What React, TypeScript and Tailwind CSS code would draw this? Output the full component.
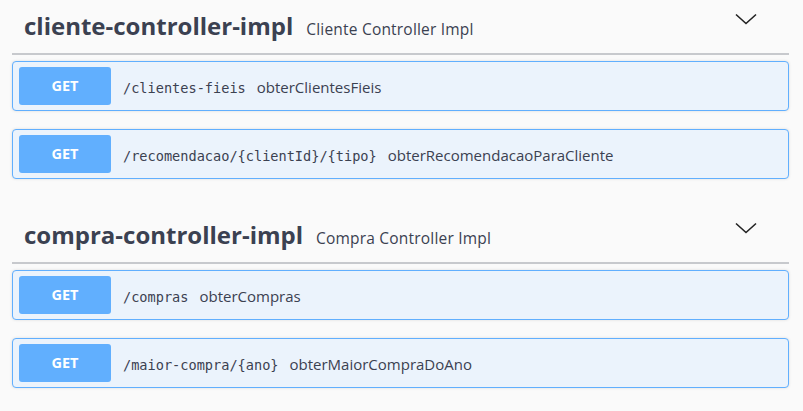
import React from 'react';

type Op = { path: string; summary: string };

const sections: { name: string; desc: string; ops: Op[] }[] = [
  {
    name: 'cliente-controller-impl',
    desc: 'Cliente Controller Impl',
    ops: [
      { path: '/clientes-fieis', summary: 'obterClientesFieis' },
      { path: '/recomendacao/{clientId}/{tipo}', summary: 'obterRecomendacaoParaCliente' },
    ],
  },
  {
    name: 'compra-controller-impl',
    desc: 'Compra Controller Impl',
    ops: [
      { path: '/compras', summary: 'obterCompras' },
      { path: '/maior-compra/{ano}', summary: 'obterMaiorCompraDoAno' },
    ],
  },
];

const Chevron = () => (
  <svg width="22" height="12" viewBox="0 0 22 12" fill="none">
    <path d="M1 1.5 L11 10.5 L21 1.5" stroke="#222" strokeWidth="1.6" />
  </svg>
);

const OpBlock = ({ op }: { op: Op }) => (
  <div className="flex items-center h-[50px] px-[6px] border border-[#61affe] rounded-[4px] bg-[#ebf3fc] shadow-[0_0_3px_rgba(0,0,0,0.12)]">
    <div className="w-[92px] h-[38px] rounded-[3px] bg-[#61affe] flex items-center justify-center text-white text-[14.5px] font-bold font-['Open_Sans',sans-serif]">
      GET
    </div>
    <div className="ml-[12px] flex items-baseline text-[#3b4151] mt-[2px]">
      <span className="text-[13.6px] font-['DejaVu_Sans_Mono',monospace]">{op.path}</span>
      <span className="ml-[11px] text-[15px] font-['Open_Sans',sans-serif]">{op.summary}</span>
    </div>
  </div>
);

export default function App() {
  return (
    <div className="w-[803px] h-[411px] bg-[#fafafa] overflow-hidden">
      <div className="ml-[12px] w-[777px]">
        {sections.map((s, i) => (
          <div key={s.name}>
            <div
              className={`flex items-end justify-between border-b-2 border-[#c7c9cd] pl-[12px] pr-[32px] pb-[12px] ${
                i === 0 ? 'h-[55px]' : 'h-[85px]'
              }`}
            >
              <div className="flex items-baseline">
                <span className="text-[24px] leading-[30px] font-bold text-[#3b4151] font-['Open_Sans',sans-serif]">
                  {s.name}
                </span>
                <span className="ml-[13px] text-[15.5px] tracking-[0.2px] text-[#3b4151] font-['Open_Sans',sans-serif]">
                  {s.desc}
                </span>
              </div>
              <div className="mb-[16px]">
                <Chevron />
              </div>
            </div>
            <div className="mt-[6px] flex flex-col gap-[18px]">
              {s.ops.map((op) => (
                <OpBlock key={op.path} op={op} />
              ))}
            </div>
          </div>
        ))}
      </div>
    </div>
  );
}
